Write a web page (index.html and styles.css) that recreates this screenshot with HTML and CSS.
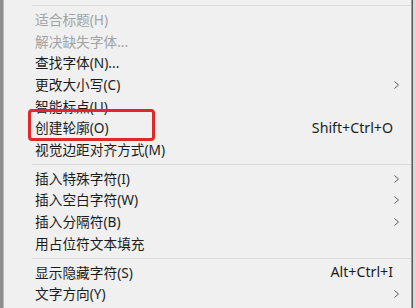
FILE: index.html
```html
<!DOCTYPE html>
<html lang="zh">
<head>
<meta charset="utf-8">
<link rel="stylesheet" href="styles.css">
</head>
<body>
<div class="screen">
  <div class="edge-left"></div>
  <div class="menu">
    <div class="sep"></div>
    <div class="item disabled"><span class="label">适合标题(H)</span></div>
    <div class="item disabled"><span class="label">解决缺失字体...</span></div>
    <div class="item"><span class="label">查找字体(N)...</span></div>
    <div class="item"><span class="label">更改大小写(C)</span><svg class="arrow" viewBox="0 0 5 8"><polyline points="0.5,0.5 4.5,4 0.5,7.5"/></svg></div>
    <div class="item"><span class="label">智能标点(U)...</span></div>
    <div class="item highlight"><span class="label">创建轮廓(O)</span><span class="shortcut">Shift+Ctrl+O</span><span class="redbox"></span></div>
    <div class="item"><span class="label">视觉边距对齐方式(M)</span></div>
    <div class="sep"></div>
    <div class="item"><span class="label">插入特殊字符(I)</span><svg class="arrow" viewBox="0 0 5 8"><polyline points="0.5,0.5 4.5,4 0.5,7.5"/></svg></div>
    <div class="item"><span class="label">插入空白字符(W)</span><svg class="arrow" viewBox="0 0 5 8"><polyline points="0.5,0.5 4.5,4 0.5,7.5"/></svg></div>
    <div class="item"><span class="label">插入分隔符(B)</span><svg class="arrow" viewBox="0 0 5 8"><polyline points="0.5,0.5 4.5,4 0.5,7.5"/></svg></div>
    <div class="item"><span class="label">用占位符文本填充</span></div>
    <div class="sep"></div>
    <div class="item"><span class="label">显示隐藏字符(S)</span><span class="shortcut">Alt+Ctrl+I</span></div>
    <div class="item"><span class="label">文字方向(Y)</span><svg class="arrow" viewBox="0 0 5 8"><polyline points="0.5,0.5 4.5,4 0.5,7.5"/></svg></div>
    <div class="sep"></div>
  </div>
  <div class="edge-right"></div>
</div>
</body>
</html>
```

FILE: styles.css
```css
html, body {
  margin: 0;
  padding: 0;
  background: #f0f0f0;
}
.screen {
  display: flex;
  width: 416px;
  height: 308px;
  overflow: hidden;
}
.edge-left {
  width: 3px;
  background: #8e8e8e;
  border-right: 1px solid #b8b8b8;
  flex: none;
}
.menu {
  flex: 1;
  background: #f0f0f0;
  padding-top: 2px;
  font-family: "Noto Sans", "Noto Sans CJK SC", sans-serif;
  font-size: 13.7px;
  color: #1c1c1c;
  border-right: 1px solid #9a9a9a;
}
.edge-right {
  width: 3px;
  flex: none;
  background: #d8d8d8;
  border-left: 1px solid #5a5a5a;
}
.sep {
  height: 1px;
  background: #d9d9d9;
  margin: 3px 0 3px 28px;
}
.item {
  position: relative;
  height: 21.7px;
  display: flex;
  align-items: center;
  padding-left: 31px;
  padding-right: 15px;
  line-height: 1;
}
.item.disabled {
  color: #a3a3a3;
}
.label {
  flex: 1;
  white-space: nowrap;
}
.shortcut {
  font-size: 14.2px;
  margin-right: 3px;
  white-space: nowrap;
}
.arrow {
  width: 5px;
  height: 8px;
  margin-right: -3px;
  fill: none;
  stroke: #5c5c5c;
  stroke-width: 1;
}
.redbox {
  position: absolute;
  left: 24px;
  top: -8px;
  width: 127px;
  height: 32px;
  box-sizing: border-box;
  border: 3px solid #e3262b;
  border-radius: 4px;
}
```
